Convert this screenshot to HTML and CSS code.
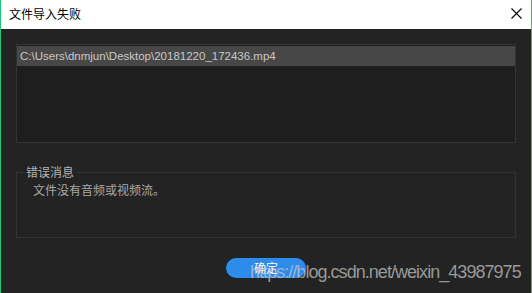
FILE: index.html
```html
<!DOCTYPE html>
<html lang="zh-CN">
<head>
  <meta charset="UTF-8">
  <title>文件导入失败</title>
  <link rel="stylesheet" href="styles.css">
</head>
<body>

  <div class="window">
    <div class="titlebar">
      <span class="title">文件导入失败</span>
      <svg class="close" width="11" height="11" viewBox="0 0 11 11">
        <path d="M0.5 0.5 L10.5 10.5 M10.5 0.5 L0.5 10.5" stroke="#000" stroke-width="1.1" fill="none"/>
      </svg>
    </div>

    <div class="content">
      <div class="file-list">
        <div class="file-item selected">C:\Users\dnmjun\Desktop\20181220_172436.mp4</div>
      </div>

      <fieldset class="message-box">
        <legend>错误消息</legend>
        <p>文件没有音频或视频流。</p>
      </fieldset>

      <div class="actions">
        <button class="btn-ok">确定</button>
      </div>
    </div>

    <div class="watermark">https://blog.csdn.net/weixin_43987975</div>
  </div>

</body>
</html>
```

FILE: styles.css
```css
body {
  margin: 0;
  background-color: #232323;
  font-family: "Noto Sans CJK SC", "Liberation Sans", sans-serif;
}

.window {
  position: relative;
  height: 293px;
  box-sizing: border-box;
  border-left: 1px solid #22c77f;
  border-right: 1px solid #22c77f;
  background-color: #232323;
}

.titlebar {
  display: flex;
  justify-content: space-between;
  align-items: center;
  height: 29px;
  box-sizing: border-box;
  padding: 0 9px 2px 8px;
  background-color: #fff;
}

.title {
  font-size: 12px;
  line-height: 14px;
  color: #000;
}

.close {
  display: block;
}

.content {
  padding: 15px 15px 0;
}

.file-list {
  height: 99px;
  box-sizing: border-box;
  padding-top: 1px;
  border: 1px solid #333;
  background-color: #1e1e1e;
}

.file-item {
  height: 20px;
  line-height: 20px;
  padding-left: 3px;
  font-family: "Liberation Sans", sans-serif;
  font-size: 11.5px;
  color: #c8c8c8;
}

.file-item.selected {
  background-color: #474747;
}

.message-box {
  margin: 22px 0 0;
  padding: 0 0 0 7px;
  border: 1px solid #333;
}

.message-box legend {
  padding: 0 2px;
  font-size: 12px;
  line-height: 14px;
  color: #b4b4b4;
}

.message-box p {
  height: 55px;
  margin: 3px 0 0;
  padding-left: 9px;
  font-size: 12px;
  line-height: 16px;
  color: #a8a8a8;
}

.actions {
  display: flex;
  justify-content: center;
  margin-top: 20px;
}

.btn-ok {
  width: 80px;
  height: 20px;
  padding: 0;
  border: none;
  border-radius: 10px;
  background-color: #2d8ceb;
  color: #fff;
  font-family: "Noto Sans CJK SC", sans-serif;
  font-size: 12px;
  line-height: 20px;
}

.watermark {
  position: absolute;
  left: 249px;
  top: 262px;
  font-family: "Liberation Sans", sans-serif;
  font-size: 18px;
  line-height: 20px;
  letter-spacing: -0.96px;
  color: rgba(200, 200, 200, 0.72);
  white-space: nowrap;
}
```
